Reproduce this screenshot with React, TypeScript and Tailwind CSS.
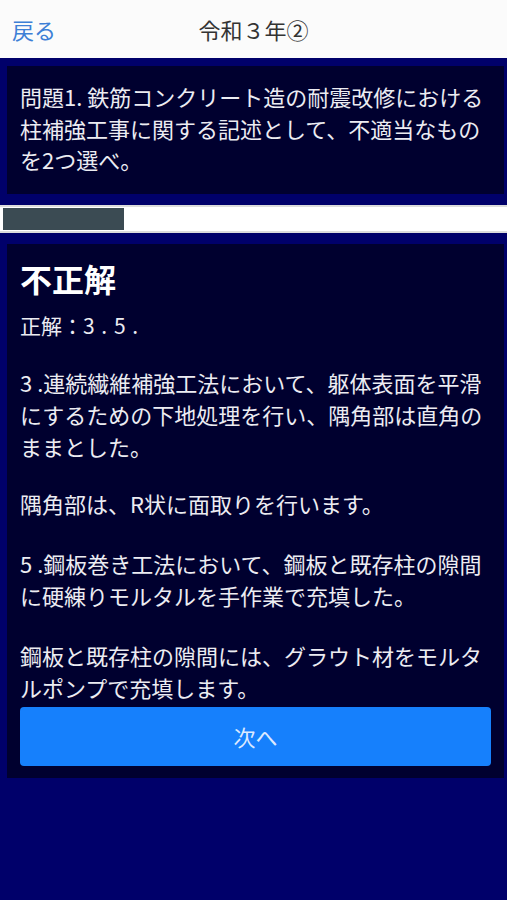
import React from "react";

export default function App() {
  return (
    <div className="min-h-[900px] w-full bg-[#00006a] font-['Noto_Sans_CJK_JP','Noto_Sans',sans-serif]">
      <header className="relative flex h-[58px] items-center justify-center bg-[#fbfbfb]">
        <span className="absolute left-[12px] top-[13px] text-[22px] leading-[32px] text-[#3d7fd6]">戻る</span>
        <span className="text-[22px] leading-[32px] text-[#333333]">令和３年②</span>
      </header>
      <div className="pl-[7px] pr-[3px] pt-[8px]">
        <div className="bg-[#00002f] pl-[13px] pr-[12px] pt-[15px] pb-[18px] text-[22px] leading-[31.5px] text-[#ececf2]">
          問題1. 鉄筋コンクリート造の耐震改修における柱補強工事に関する記述として、不適当なものを2つ選べ。
        </div>
      </div>
      <div className="mt-[11px] h-[28px] w-full border-y-[2px] border-[#dcdcdc] bg-white px-[3px] py-[1px]">
        <div className="h-full w-[121px] bg-[#3b4b53]" />
      </div>
      <div className="pl-[7px] pr-[3px] pt-[11px]">
        <div className="bg-[#00002f] pl-[13px] pr-[12px] pt-[10px] pb-[12px] text-[#ececf2]">
          <div className="text-[32px] font-bold leading-[48px] text-white">不正解</div>
          <div className="mt-[7px] text-[21px] leading-[32px]">
            正解：<span className="tracking-[1px]">3 . 5 .</span>
          </div>
          <p className="mt-[25px] text-[22px] leading-[32px]">
            3 .連続繊維補強工法において、躯体表面を平滑にするための下地処理を行い、隅角部は直角のままとした。
          </p>
          <p className="mt-[25px] text-[22px] leading-[32px]">隅角部は、R状に面取りを行います。</p>
          <p className="mt-[28px] text-[22px] leading-[32px]">
            5 .鋼板巻き工法において、鋼板と既存柱の隙間に硬練りモルタルを手作業で充填した。
          </p>
          <p className="mt-[28px] text-[22px] leading-[32px]">
            鋼板と既存柱の隙間には、グラウト材をモルタルポンプで充填します。
          </p>
          <button className="mt-[4px] flex h-[59px] w-[471px] items-center justify-center rounded-[4px] bg-[#1680fc] text-[22px] text-[#dce9ff]">
            次へ
          </button>
        </div>
      </div>
    </div>
  );
}
